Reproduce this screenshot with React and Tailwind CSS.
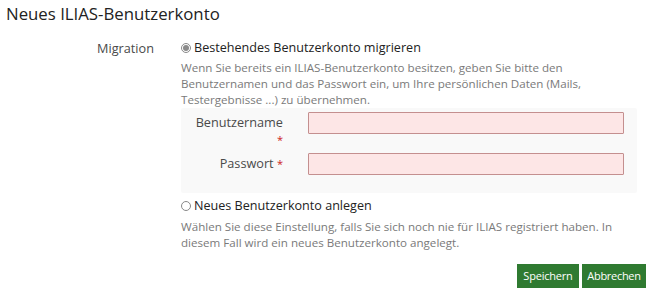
export default function App() {
    return (
        <div
            className="w-[657px] h-[296px] bg-white text-[#333] overflow-hidden"
            style={{ fontFamily: '"Open Sans", sans-serif' }}
        >
            <h1 className="pl-[6px] pt-[3px] text-[16.8px] leading-[22px] text-[#222] font-normal">
                Neues ILIAS-Benutzerkonto
            </h1>

            <div className="flex mt-[13px]">
                <div className="w-[154px] text-right text-[12.7px] leading-[20px] text-[#4a4a4a]">
                    Migration
                </div>

                <div className="ml-[27px] w-[456px]">
                    <label className="flex items-center text-[12.6px] leading-[20px] text-[#222]">
                        <span className="w-[10px] h-[10px] rounded-full border border-[#8a8a8a] flex items-center justify-center mr-[3px]">
                            <span className="w-[6px] h-[6px] rounded-full bg-[#8a8a8a]" />
                        </span>
                        Bestehendes Benutzerkonto migrieren
                    </label>
                    <p className="mt-[2px] text-[11.6px] leading-[16px] text-[#7a7a7a]">
                        Wenn Sie bereits ein ILIAS-Benutzerkonto besitzen, geben Sie bitte den
                        Benutzernamen und das Passwort ein, um Ihre persönlichen Daten (Mails,
                        Testergebnisse ...) zu übernehmen.
                    </p>

                    {/* sub form */}
                    <div className="bg-[#f9f9f9] rounded-[2px] pt-[4px] pb-[18px] pr-[13px] pl-[12px]">
                        <div className="flex">
                            <div className="w-[90px] text-right pt-[2px] text-[12.7px] leading-[17px] text-[#4a4a4a]">
                                Benutzername <span className="text-[#cc2222] text-[11px]">*</span>
                            </div>
                            <input
                                type="text"
                                className="ml-[25px] flex-1 h-[22px] bg-[#fde6e6] border border-[#c48f8f] rounded-[1px] outline-none"
                            />
                        </div>
                        <div className="flex mt-[5px]">
                            <div className="w-[90px] text-right pt-[2px] text-[12.7px] leading-[17px] text-[#4a4a4a]">
                                Passwort <span className="text-[#cc2222] text-[11px]">*</span>
                            </div>
                            <input
                                type="password"
                                className="ml-[25px] flex-1 h-[22px] bg-[#fde6e6] border border-[#c48f8f] rounded-[1px] outline-none"
                            />
                        </div>
                    </div>

                    <label className="mt-[3px] flex items-center text-[12.6px] leading-[20px] text-[#222]">
                        <span className="w-[10px] h-[10px] rounded-full border border-[#888] mr-[3px]" />
                        Neues Benutzerkonto anlegen
                    </label>
                    <p className="mt-[3px] w-[440px] text-[11.6px] leading-[16px] text-[#7a7a7a]">
                        Wählen Sie diese Einstellung, falls Sie sich noch nie für ILIAS registriert haben. In
                        diesem Fall wird ein neues Benutzerkonto angelegt.
                    </p>
                </div>
            </div>

            <div className="flex justify-end gap-[3px] pr-[11px] mt-[13px]">
                <button className="h-[24px] w-[62px] bg-[#2f7a31] text-white text-[11px] tracking-[-0.2px]">
                    Speichern
                </button>
                <button className="h-[24px] w-[64px] bg-[#2f7a31] text-white text-[11px] tracking-[-0.3px]">
                    Abbrechen
                </button>
            </div>
        </div>
    )
}
